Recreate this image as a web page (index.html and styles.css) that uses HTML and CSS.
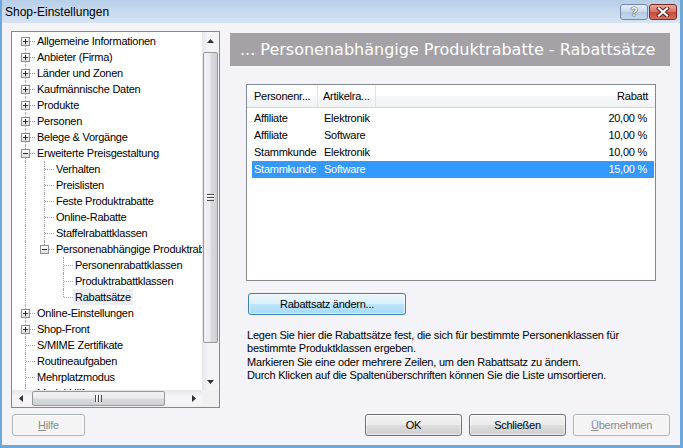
FILE: index.html
```html
<!DOCTYPE html>
<html lang="de">
<head>
    <meta charset="UTF-8">
    <meta name="viewport" content="width=device-width, initial-scale=1.0">
    <title>Shop-Einstellungen</title>
    <link rel="stylesheet" href="styles.css">
</head>
<body>

<div class="window">
    <div class="titlebar">
        <span class="title">Shop-Einstellungen</span>
        <div class="caption">
            <span class="cap-btn help">?</span>
            <span class="cap-btn close">
                <svg width="14" height="10" viewBox="0 0 14 10">
                    <path d="M3 1.5 L11 8.5 M11 1.5 L3 8.5" stroke="#5a1f1f" stroke-width="4" stroke-linecap="square"/>
                    <path d="M3 1.5 L11 8.5 M11 1.5 L3 8.5" stroke="#ffffff" stroke-width="2.2" stroke-linecap="square"/>
                </svg>
            </span>
        </div>
    </div>

    <div class="client">
        <div class="main">

            <!-- navigation tree -->
            <div class="tree-panel">
                <div class="tree-top">
                    <div class="tree">
                        <div class="node"><span class="c first"><i class="box plus"></i></span><span class="label">Allgemeine Informationen</span></div>
                        <div class="node"><span class="c tee"><i class="box plus"></i></span><span class="label">Anbieter (Firma)</span></div>
                        <div class="node"><span class="c tee"><i class="box plus"></i></span><span class="label">Länder und Zonen</span></div>
                        <div class="node"><span class="c tee"><i class="box plus"></i></span><span class="label">Kaufmännische Daten</span></div>
                        <div class="node"><span class="c tee"><i class="box plus"></i></span><span class="label">Produkte</span></div>
                        <div class="node"><span class="c tee"><i class="box plus"></i></span><span class="label">Personen</span></div>
                        <div class="node"><span class="c tee"><i class="box plus"></i></span><span class="label">Belege &amp; Vorgänge</span></div>
                        <div class="node"><span class="c tee"><i class="box"></i></span><span class="label">Erweiterte Preisgestaltung</span></div>
                        <div class="node"><span class="c line"></span><span class="c tee"></span><span class="label">Verhalten</span></div>
                        <div class="node"><span class="c line"></span><span class="c tee"></span><span class="label">Preislisten</span></div>
                        <div class="node"><span class="c line"></span><span class="c tee"></span><span class="label">Feste Produktrabatte</span></div>
                        <div class="node"><span class="c line"></span><span class="c tee"></span><span class="label">Online-Rabatte</span></div>
                        <div class="node"><span class="c line"></span><span class="c tee"></span><span class="label">Staffelrabattklassen</span></div>
                        <div class="node"><span class="c line"></span><span class="c end"><i class="box"></i></span><span class="label">Personenabhängige Produktrabatte</span></div>
                        <div class="node"><span class="c line"></span><span class="c"></span><span class="c tee"></span><span class="label">Personenrabattklassen</span></div>
                        <div class="node"><span class="c line"></span><span class="c"></span><span class="c tee"></span><span class="label">Produktrabattklassen</span></div>
                        <div class="node"><span class="c line"></span><span class="c"></span><span class="c end"></span><span class="label sel">Rabattsätze</span></div>
                        <div class="node"><span class="c tee"><i class="box plus"></i></span><span class="label">Online-Einstellungen</span></div>
                        <div class="node"><span class="c tee"><i class="box plus"></i></span><span class="label">Shop-Front</span></div>
                        <div class="node"><span class="c tee"></span><span class="label">S/MIME Zertifikate</span></div>
                        <div class="node"><span class="c tee"></span><span class="label">Routineaufgaben</span></div>
                        <div class="node"><span class="c tee"></span><span class="label">Mehrplatzmodus</span></div>
                        <div class="node"><span class="c tee"></span><span class="label">Modul-Hilfe</span></div>
                    </div>
                    <div class="vscroll">
                        <div class="arrow">
                            <svg width="7" height="4" viewBox="0 0 7 4"><path d="M0 4 L3.5 0 L7 4 Z" fill="#303030"/></svg>
                        </div>
                        <div class="vthumb"><span class="grip-h"></span></div>
                        <div class="track"></div>
                        <div class="arrow">
                            <svg width="7" height="4" viewBox="0 0 7 4"><path d="M0 0 L3.5 4 L7 0 Z" fill="#303030"/></svg>
                        </div>
                    </div>
                </div>
                <div class="tree-bottom">
                    <div class="hscroll">
                        <div class="arrow">
                            <svg width="4" height="7" viewBox="0 0 4 7"><path d="M4 0 L0 3.5 L4 7 Z" fill="#303030"/></svg>
                        </div>
                        <div class="hthumb"><span class="grip-v"></span></div>
                        <div class="track"></div>
                        <div class="arrow">
                            <svg width="4" height="7" viewBox="0 0 4 7"><path d="M0 0 L4 3.5 L0 7 Z" fill="#303030"/></svg>
                        </div>
                    </div>
                    <div class="corner"></div>
                </div>
            </div>

            <!-- page content -->
            <div class="content">
                <div class="banner">... Personenabhängige Produktrabatte - Rabattsätze</div>

                <div class="list">
                    <div class="list-head">
                        <div class="hcol h1">Personenr...</div>
                        <div class="hcol h2">Artikelra...</div>
                        <div class="hcol h3">Rabatt</div>
                    </div>
                    <div class="list-body">
                        <div class="lrow"><span class="r1">Affiliate</span><span class="r2">Elektronik</span><span class="r3">20,00 %</span></div>
                        <div class="lrow"><span class="r1">Affiliate</span><span class="r2">Software</span><span class="r3">10,00 %</span></div>
                        <div class="lrow"><span class="r1">Stammkunde</span><span class="r2">Elektronik</span><span class="r3">10,00 %</span></div>
                        <div class="lrow selected"><span class="r1">Stammkunde</span><span class="r2">Software</span><span class="r3">15,00 %</span></div>
                    </div>
                </div>

                <button class="btn focus wide">Rabattsatz ändern...</button>

                <p class="info">
                    Legen Sie hier die Rabattsätze fest, die sich für bestimmte Personenklassen für<br>
                    bestimmte Produktklassen ergeben.<br>
                    Markieren Sie eine oder mehrere Zeilen, um den Rabattsatz zu ändern.<br>
                    Durch Klicken auf die Spaltenüberschriften können Sie die Liste umsortieren.
                </p>
            </div>
        </div>

        <div class="footer">
            <button class="btn disabled small"><u>H</u>ilfe</button>
            <div class="spacer"></div>
            <button class="btn">OK</button>
            <button class="btn">Schließen</button>
            <button class="btn disabled"><u>Ü</u>bernehmen</button>
        </div>
    </div>
</div>

</body>
</html>
```

FILE: styles.css
```css
body {
    margin: 0;
    padding: 0;
    font-family: "Liberation Sans", Arial, sans-serif;
    font-size: 11px;
    letter-spacing: -0.25px;
}

.window {
    width: 683px;
    height: 448px;
    box-sizing: border-box;
    border-left: 2px solid #6ea7dc;
    border-right: 3px solid #6ea7dc;
    border-bottom: 3px solid #6ea7dc;
    display: flex;
    flex-direction: column;
    background: #f4f3f8;
}

/* title bar */
.titlebar {
    height: 23px;
    flex: none;
    display: flex;
    align-items: center;
    justify-content: space-between;
    padding: 0 3px 0 3px;
    background: linear-gradient(#b7cee8, #c9dbef 55%, #d6e4f3);
}
.title {
    font-size: 12px;
    letter-spacing: 0;
    color: #000;
}
.caption {
    display: flex;
    gap: 1px;
    align-self: flex-start;
    margin-top: 4px;
}
.cap-btn {
    width: 26px;
    height: 14px;
    border: 1px solid #6f87a6;
    border-radius: 3px;
    display: flex;
    align-items: center;
    justify-content: center;
}
.help {
    background: linear-gradient(#e6eef8, #c8d8ec 50%, #b4c9e3 50%, #c6d8ee);
    color: #fff;
    font: bold 12px "Liberation Sans", Arial, sans-serif;
    text-shadow: 0 0 1px #33415a, 0 0 1px #33415a, 0 0 1px #33415a;
}
.close {
    border-color: #7a2a22;
    background: linear-gradient(#e9a999, #d4705c 50%, #c4483a 50%, #d6705e);
}

/* client area */
.client {
    flex: 1;
    display: flex;
    flex-direction: column;
}
.main {
    display: flex;
    padding: 8px 10px 0 9px;
    gap: 10px;
}

/* tree */
.tree-panel {
    width: 209px;
    height: 377px;
    box-sizing: border-box;
    border: 1px solid #828790;
    background: #fff;
    display: flex;
    flex-direction: column;
}
.tree-top {
    display: flex;
    height: 358px;
}
.tree {
    width: 190px;
    padding: 1px 0 0 5px;
    box-sizing: border-box;
    overflow: hidden;
}
.node {
    display: flex;
    height: 16px;
    white-space: nowrap;
}
.c {
    position: relative;
    width: 19px;
    height: 16px;
    flex: none;
}
.c.tee::before,
.c.line::before,
.c.end::before,
.c.first::before {
    content: "";
    position: absolute;
    left: 8px;
    top: 0;
    height: 16px;
    border-left: 1px dotted #a0a0a0;
}
.c.end::before {
    height: 8px;
}
.c.first::before {
    top: 8px;
    height: 8px;
}
.c.tee::after,
.c.end::after,
.c.first::after {
    content: "";
    position: absolute;
    left: 9px;
    top: 8px;
    width: 9px;
    border-top: 1px dotted #a0a0a0;
}
.box {
    position: absolute;
    left: 4px;
    top: 4px;
    width: 7px;
    height: 7px;
    border: 1px solid #8e8f92;
    background: linear-gradient(#ffffff, #dcdde2);
    z-index: 1;
}
.box::before {
    content: "";
    position: absolute;
    left: 1px;
    top: 3px;
    width: 5px;
    height: 1px;
    background: #1c2b4a;
}
.box.plus::after {
    content: "";
    position: absolute;
    left: 3px;
    top: 1px;
    width: 1px;
    height: 5px;
    background: #1c2b4a;
}
.label {
    line-height: 16px;
    padding: 0 2px;
    margin-left: -1px;
    color: #000;
}
.label.sel {
    background: #ededf1;
}

/* scrollbars */
.vscroll {
    width: 17px;
    display: flex;
    flex-direction: column;
    background: linear-gradient(to right, #e6e6ea, #f5f5f7 40%, #f3f3f5);
}
.arrow {
    width: 17px;
    height: 17px;
    flex: none;
    display: flex;
    align-items: center;
    justify-content: center;
}
.vthumb {
    margin: 3px 1px 0 1px;
    height: 289px;
    border: 1px solid #979797;
    border-radius: 2px;
    background: linear-gradient(to right, #f2f2f4, #ebebef 45%, #d9d9e0 55%, #cfcfd6);
    display: flex;
    align-items: center;
    justify-content: center;
}
.grip-h {
    width: 7px;
    height: 7px;
    background: repeating-linear-gradient(#4c4c4c 0 1px, #ffffff 1px 2px, transparent 2px 3px);
}
.track {
    flex: 1;
}
.tree-bottom {
    display: flex;
    height: 17px;
}
.hscroll {
    width: 190px;
    display: flex;
    background: linear-gradient(#e6e6ea, #f5f5f7 40%, #f3f3f5);
}
.hthumb {
    margin: 1px 0 1px 3px;
    width: 131px;
    border: 1px solid #979797;
    border-radius: 2px;
    background: linear-gradient(#f2f2f4, #ebebef 45%, #d9d9e0 55%, #cfcfd6);
    display: flex;
    align-items: center;
    justify-content: center;
}
.grip-v {
    width: 7px;
    height: 7px;
    background: repeating-linear-gradient(to right, #4c4c4c 0 1px, #ffffff 1px 2px, transparent 2px 3px);
}
.corner {
    width: 17px;
    background: #f0f0f0;
}

/* right side */
.content {
    width: 440px;
    margin-top: 2px;
    display: flex;
    flex-direction: column;
    align-items: flex-start;
}
.banner {
    width: 440px;
    height: 33px;
    box-sizing: border-box;
    padding-left: 10px;
    background: #a4a2a7;
    color: #fff;
    font-family: "DejaVu Sans", Verdana, sans-serif;
    font-size: 16px;
    letter-spacing: 0;
    line-height: 33px;
    white-space: nowrap;
    overflow: hidden;
}
.list {
    margin: 18px 0 0 16px;
    width: 410px;
    height: 197px;
    box-sizing: border-box;
    border: 1px solid #828790;
    background: #fff;
}
.list-head {
    display: flex;
    height: 23px;
    border-bottom: 1px solid #d5d5d5;
    background: linear-gradient(#ffffff, #ffffff 50%, #f7f8f9 50%, #f1f2f4);
    box-sizing: border-box;
}
.hcol {
    line-height: 22px;
    box-sizing: border-box;
    white-space: nowrap;
}
.h1 {
    width: 71px;
    padding-left: 7px;
    border-right: 1px solid #e1e3e6;
}
.h2 {
    width: 58px;
    padding-left: 5px;
    border-right: 1px solid #e1e3e6;
}
.h3 {
    flex: 1;
    text-align: right;
    padding-right: 7px;
}
.list-body {
    padding: 2px 1px 0 5px;
}
.lrow {
    display: flex;
    height: 17px;
    line-height: 17px;
    white-space: nowrap;
}
.lrow.selected {
    background: #3399ff;
    color: #fff;
}
.r1 {
    width: 66px;
    padding-left: 2px;
    box-sizing: border-box;
}
.r2 {
    width: 58px;
    padding-left: 6px;
    box-sizing: border-box;
}
.r3 {
    flex: 1;
    text-align: right;
    padding-right: 7px;
}

.info {
    margin: 14px 0 0 17px;
    line-height: 13.33px;
    letter-spacing: -0.2px;
    white-space: nowrap;
}

/* buttons */
.btn {
    width: 97px;
    height: 22px;
    padding: 0;
    border: 1px solid #707070;
    border-radius: 3px;
    background: linear-gradient(#f2f2f2, #ebebeb 50%, #dddddd 50%, #cfcfcf);
    box-shadow: inset 0 0 0 1px rgba(255, 255, 255, 0.6);
    font-family: "Liberation Sans", Arial, sans-serif;
    font-size: 11px;
    letter-spacing: -0.25px;
    color: #000;
}
.btn.wide {
    width: 158px;
    margin: 12px 0 0 18px;
}
.btn.focus {
    border-color: #3c7fb1;
    background: linear-gradient(#eaf6fd, #d9f0fc 50%, #bee6fd 50%, #a7d9f5);
}
.btn.disabled {
    border-color: #adb2b5;
    background: #f4f4f4;
    color: #8a8a8a;
}
.btn.small {
    width: 73px;
}

.footer {
    display: flex;
    gap: 7px;
    padding: 6px 10px 9px 10px;
}
.spacer {
    flex: 1;
}
```
